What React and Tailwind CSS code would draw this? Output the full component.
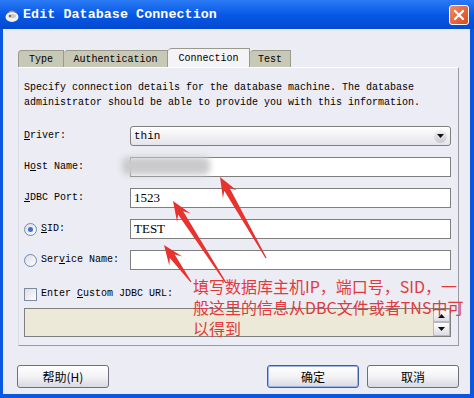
import React from "react";

const arrowPoints = (x1, y1, x2, y2) => {
  // tapered arrow: thin tail at (x1,y1), head tip at (x2,y2)
  const dx = x2 - x1;
  const dy = y2 - y1;
  const len = Math.sqrt(dx * dx + dy * dy);
  const ux = dx / len;
  const uy = dy / len;
  const px = -uy;
  const py = ux;
  const headLen = 20;
  const headW = 8;
  const neckW = 3;
  const tailW = 0.6;
  const bx = x2 - ux * headLen;
  const by = y2 - uy * headLen;
  const nx = x2 - ux * (headLen - 6);
  const ny = y2 - uy * (headLen - 6);
  const pts = [
    [x1 + px * tailW, y1 + py * tailW],
    [nx + px * neckW, ny + py * neckW],
    [bx + px * headW, by + py * headW],
    [x2, y2],
    [bx - px * headW, by - py * headW],
    [nx - px * neckW, ny - py * neckW],
    [x1 - px * tailW, y1 - py * tailW],
  ];
  return pts.map((p) => p.join(",")).join(" ");
};

const Label = ({ children }) => (
  <span className="text-[10px] leading-[20px] text-black">{children}</span>
);

const TextBox = ({ value }) => (
  <div className="h-[20px] bg-white border border-[#7f7f7f] flex items-center px-[3px]">
    <span className="text-[13px] text-black font-['Liberation_Serif',serif]">{value}</span>
  </div>
);

const Radio = ({ checked }) => (
  <span className="w-[13px] h-[13px] rounded-full border border-[#6f8bb0] bg-gradient-to-br from-[#dcdce4] to-white flex items-center justify-center">
    {checked && <span className="w-[5px] h-[5px] rounded-full bg-[#3f6fcf]" />}
  </span>
);

const XpButton = ({ children, focused }) => (
  <div
    className={`h-[23px] rounded-[3px] border flex items-center justify-center bg-gradient-to-b from-white via-[#f3f3f6] to-[#d8d8e2] text-[12px] text-black font-['Noto_Sans_CJK_SC',sans-serif] ${
      focused ? "border-[#3d5fa6] shadow-[inset_0_0_0_1px_#9db6e6]" : "border-[#6f6f78]"
    }`}
  >
    {children}
  </div>
);

export default function App() {
  return (
    <div className="w-[474px] h-[398px] relative overflow-hidden bg-[#0b58e0] flex flex-col font-['Liberation_Mono',monospace]">
      {/* Title bar */}
      <div className="h-[29px] flex items-center bg-gradient-to-b from-[#2a7af5] via-[#0759e6] to-[#0448d0] pl-[4px] pr-[4px]">
        <svg width="16" height="16" viewBox="0 0 16 16" className="mr-[3px]">
          <ellipse cx="8" cy="10" rx="6.5" ry="5" fill="#f2f2f2" />
          <ellipse cx="8" cy="9" rx="4" ry="2" fill="#c8c8c8" />
          <path d="M3 6 Q8 1 13 6 Q8 4 3 6Z" fill="#e9822a" />
          <circle cx="6" cy="9" r="1" fill="#7a4a20" />
        </svg>
        <span className="text-white font-bold text-[13.3px] tracking-[0.1px] flex-1">Edit Database Connection</span>
        <div className="w-[20px] h-[20px] rounded-[3px] border border-white bg-gradient-to-br from-[#f08a60] to-[#d8471c] flex items-center justify-center mr-[1px]">
          <svg width="12" height="12" viewBox="0 0 12 12">
            <path d="M2 2 L10 10 M10 2 L2 10" stroke="white" strokeWidth="2.2" strokeLinecap="round" />
          </svg>
        </div>
      </div>

      {/* Body */}
      <div className="flex-1 mx-[3px] mb-[4px] mr-[4px] bg-[#ececf4] flex flex-col pl-[15px] pr-[11px] pt-[19px]">
        {/* Tabs */}
        <div className="flex items-end h-[19px] text-[10px] text-black">
          <div className="w-[46px] h-[17px] bg-[#c8c8b6] border border-[#9a9a8a] border-b-0 rounded-tl-[4px] flex items-center justify-center">Type</div>
          <div className="w-[104px] h-[17px] bg-[#c8c8b6] border border-[#9a9a8a] border-b-0 border-l-0 rounded-tl-[4px] flex items-center justify-center">Authentication</div>
          <div className="w-[82px] h-[19px] bg-[#f4f4f8] border border-[#9a9a8a] border-b-0 border-l-0 rounded-tl-[4px] flex items-center justify-center">Connection</div>
          <div className="w-[41px] h-[17px] bg-[#c8c8b6] border border-[#9a9a8a] border-b-0 border-l-0 rounded-tl-[4px] flex items-center justify-center">Test</div>
        </div>

        {/* Panel */}
        <div className="h-[279px] border border-[#9a9aa4] border-t-white border-l-[#dcdce4] bg-[#ececf4] pl-[5px] pr-[7px] pt-[12px] flex flex-col">
          <p className="text-[10px] leading-[15px] text-black whitespace-pre">
            {"Specify connection details for the database machine. The database\nadministrator should be able to provide you with this information."}
          </p>

          <div className="mt-[16px] grid grid-cols-[106px_1fr] gap-y-[11px] items-center">
            <Label>
              <u>D</u>river:
            </Label>
            <div className="h-[20px] rounded-[3px] border border-[#7f7f7f] bg-gradient-to-b from-white to-[#e4e4ea] flex items-center justify-between pl-[3px] pr-[3px]">
              <span className="text-[11px] text-black">thin</span>
              <span className="w-[13px] h-[13px] rounded-full bg-gradient-to-b from-[#f4f4f6] to-[#c8c8d0] flex items-center justify-center">
                <svg width="7" height="4" viewBox="0 0 7 4">
                  <path d="M0 0 L7 0 L3.5 4Z" fill="#111" />
                </svg>
              </span>
            </div>

            <Label>
              H<u>o</u>st Name:
            </Label>
            <TextBox value="" />

            <Label>
              <u>J</u>DBC Port:
            </Label>
            <TextBox value="1523" />

            <div className="flex items-center gap-[4px]">
              <Radio checked />
              <Label>
                <u>S</u>ID:
              </Label>
            </div>
            <TextBox value="TEST" />

            <div className="flex items-center gap-[4px]">
              <Radio />
              <Label>
                Ser<u>v</u>ice Name:
              </Label>
            </div>
            <TextBox value="" />
          </div>

          <div className="mt-[14px] flex items-center gap-[4px]">
            <span className="w-[13px] h-[13px] border border-[#7a8aa0] bg-gradient-to-br from-[#dcdce4] to-white" />
            <Label>
              Enter <u>C</u>ustom JDBC URL:
            </Label>
          </div>

          <div className="mt-[4px] h-[29px] border border-[#7f7f7f] bg-[#ece9d8] flex justify-end">
            <div className="w-[17px] flex flex-col">
              <div className="h-[13px] border border-[#b8b8c0] bg-gradient-to-b from-white to-[#dcdce4] flex items-center justify-center">
                <svg width="7" height="4" viewBox="0 0 7 4">
                  <path d="M0 4 L7 4 L3.5 0Z" fill="#111" />
                </svg>
              </div>
              <div className="h-[14px] border border-[#b8b8c0] bg-gradient-to-b from-white to-[#dcdce4] flex items-center justify-center">
                <svg width="7" height="4" viewBox="0 0 7 4">
                  <path d="M0 0 L7 0 L3.5 4Z" fill="#111" />
                </svg>
              </div>
            </div>
          </div>
        </div>

        {/* Buttons */}
        <div className="mt-[19px] flex items-center">
          <div className="w-[92px] ml-[-1px]">
            <XpButton>帮助(H)</XpButton>
          </div>
          <div className="flex-1" />
          <div className="w-[92px]">
            <XpButton focused>确定</XpButton>
          </div>
          <div className="w-[92px] ml-[8px]">
            <XpButton>取消</XpButton>
          </div>
        </div>
      </div>

      {/* Blurred host name */}
      <div className="absolute left-[122px] top-[157px] w-[88px] h-[18px] bg-[#cacacd] blur-[3px] rounded-[6px]" />

      {/* Annotation arrows */}
      <svg className="absolute left-0 top-0 pointer-events-none" width="474" height="398">
        <polygon points={arrowPoints(266, 258, 220, 177)} fill="#e8322e" />
        <polygon points={arrowPoints(226, 283, 173, 201)} fill="#e8322e" />
        <polygon points={arrowPoints(191, 282, 164, 245)} fill="#e8322e" />
      </svg>

      {/* Annotation text */}
      <div className="absolute left-[193px] top-[276px] text-[16px] leading-[21px] text-[#e23a3c] font-['Noto_Sans_CJK_SC',sans-serif] whitespace-pre">
        {"填写数据库主机IP，端口号，SID，一\n般这里的信息从DBC文件或者TNS中可\n以得到"}
      </div>
    </div>
  );
}
